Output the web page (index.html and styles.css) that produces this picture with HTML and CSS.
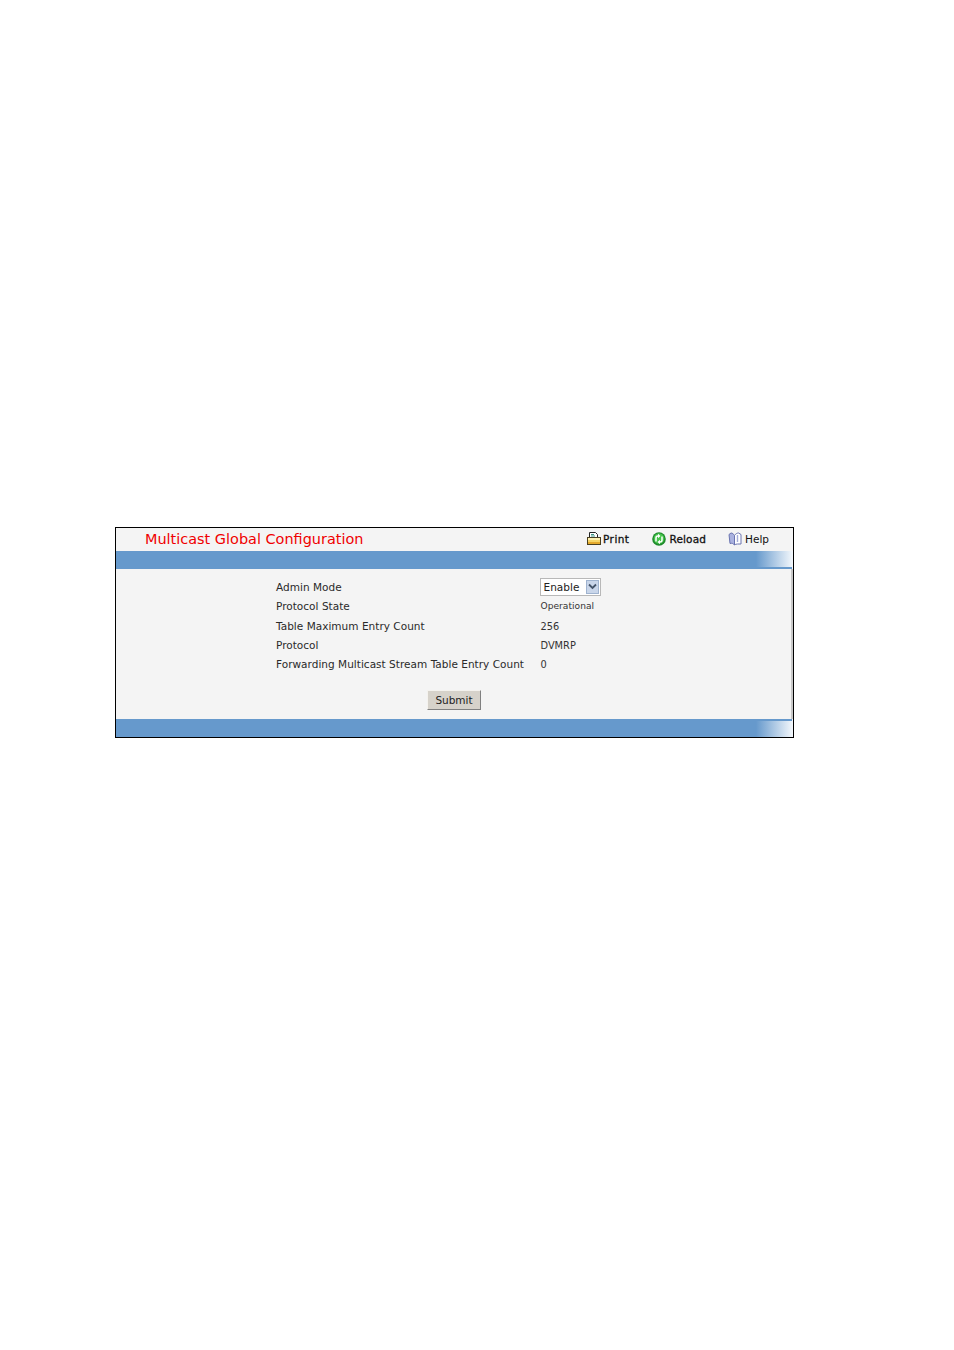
FILE: index.html
```html
<!DOCTYPE html>
<html lang="en">
<head>
<meta charset="utf-8">
<title>Multicast Global Configuration</title>
<link rel="stylesheet" href="styles.css">
</head>
<body>
<main class="frame">
  <header class="head">
    <h1 class="title">Multicast Global Configuration</h1>
    <nav class="actions">
      <a class="action print-action">
        <svg class="icon" viewBox="0 0 14 14" width="14" height="14"><path d="M2.500.5h6l2 2V5.500h-8z" fill="#fff" stroke="#222" stroke-width="1"/><path d="M4 2.500h3M4 4h4" stroke="#2a8a7a" stroke-width=".9"/><rect x=".5" y="5.500" width="13" height="7" fill="#f6d566" stroke="#4a4020" stroke-width="1"/><rect x="1" y="6" width="12" height="2" fill="#fdf0b0"/><rect x="1" y="10" width="12" height="2" fill="#e4a92c"/></svg>
        <span>Print</span>
      </a>
      <a class="action reload-action">
        <svg class="icon" viewBox="0 0 14 14" width="14" height="14"><circle cx="7" cy="7" r="6.800" fill="#1f8a2c"/><circle cx="7" cy="6.500" r="5.300" fill="#45c44a"/><path d="M4 9.500V6a2 2 0 0 1 2-2" fill="none" stroke="#fff" stroke-width="1.500"/><path d="M10 4.500V8a2 2 0 0 1-2 2" fill="none" stroke="#fff" stroke-width="1.500"/><path d="M6 1.800l2.500 2.200L6 6.200zM8 7.800L5.500 10 8 12.200z" fill="#fff"/></svg>
        <span>Reload</span>
      </a>
      <a class="action help-action">
        <svg class="icon" viewBox="0 0 14 14" width="14" height="14"><path d="M1 2.500 3 1c1.500 0 2.500 1 3.500 2.500v9.500C5.500 11.500 4 11 2 11.500z" fill="#aab2e0" stroke="#6a74b0"/><path d="M6.500 3.500C7.500 2 9 1 10.500 1L13 2.500V12H9.500c-1.200 0-2.300.3-3 1z" fill="#fff" stroke="#6a74b0"/><path d="M9.500 3v7" stroke="#a4acd8" stroke-width="1.400"/></svg>
        <span>Help</span>
      </a>
    </nav>
  </header>
  <div class="bar bar-top"></div>
  <section class="panel">
    <div class="rows">
      <div class="row">
        <span class="label">Admin Mode</span>
        <div class="field">
          <span class="select"><span class="select-text">Enable</span><span class="select-btn"><svg viewBox="0 0 9 7" width="9" height="7"><path d="M1 1.500l3.500 3.500L8 1.500" fill="none" stroke="#44546a" stroke-width="1.800"/></svg></span></span>
        </div>
      </div>
      <div class="row"><span class="label">Protocol State</span><span class="value small">Operational</span></div>
      <div class="row row-gap"><span class="label">Table Maximum Entry Count</span><span class="value">256</span></div>
      <div class="row"><span class="label">Protocol</span><span class="value">DVMRP</span></div>
      <div class="row"><span class="label">Forwarding Multicast Stream Table Entry Count</span><span class="value">0</span></div>
    </div>
    <div class="submit-row"><button class="submit" type="button">Submit</button></div>
  </section>
  <div class="bar bar-bottom"></div>
</main>
</body>
</html>
```

FILE: styles.css
```css
html, body {
  margin: 0;
  padding: 0;
  background: #fff;
}
body {
  padding: 527px 0 0 115px;
  height: 823px;
  font-family: "DejaVu Sans", Verdana, sans-serif;
  font-size: 10.500px;
  color: #222;
}
.frame {
  box-sizing: border-box;
  width: 679px;
  height: 211px;
  border: 1px solid #000;
  background: #f4f4f4;
  display: flex;
  flex-direction: column;
}
.head {
  height: 23px;
  display: flex;
  align-items: center;
  justify-content: space-between;
}
.title {
  margin: -2px 0 0 29px;
  font-size: 14.450px;
  font-weight: 400;
  color: #f00000;
  font-family: "DejaVu Sans", Verdana, sans-serif;
}
.actions {
  display: flex;
  margin-right: 24px;
}
.action {
  display: flex;
  align-items: center;
  gap: 2px;
  color: #111;
  font-size: 10.500px;
  margin-top: -1px;
}
.print-action { margin-right: 23px; }
.reload-action { margin-right: 22px; gap: 3px; }
.help-action { gap: 3px; }
.print-action span { letter-spacing: .45px; -webkit-text-stroke: .3px #111; }
.reload-action span { letter-spacing: .15px; -webkit-text-stroke: .3px #111; }
.bar {
  height: 18px;
  flex: none;
}
.bar-top {
  background:
    linear-gradient(#6699cc, #6699cc) left bottom / calc(100% - 1px) 2px no-repeat,
    linear-gradient(90deg, #6699cc 0, #6699cc 640px, #f4f8fc 100%);
}
.bar-bottom {
  background:
    linear-gradient(#6699cc, #6699cc) left top / calc(100% - 1px) 2px no-repeat,
    linear-gradient(90deg, #6699cc 0, #6699cc 640px, #f4f8fc 100%);
}
.panel {
  flex: 1;
  border-right: 2px solid #c8c8c8;
  display: flex;
  flex-direction: column;
  padding-top: 8px;
}
.rows {
  padding-left: 160px;
}
.row {
  display: flex;
  align-items: center;
  height: 19px;
  letter-spacing: .025px;
}
.row-gap {
  margin-top: 1px;
}
.label {
  width: 264.500px;
  flex: none;
  color: #2a2a2a;
}
.value {
  color: #333;
  font-size: 9.800px;
  padding-top: 1px;
}
.small { font-size: 9.100px; }
.select {
  display: flex;
  align-items: center;
  box-sizing: border-box;
  width: 61px;
  height: 18px;
  background: #fff;
  border: 1px solid #b8b8b8;
  margin-left: -1px;
}
.select-text {
  flex: 1;
  padding-left: 3px;
  color: #222;
}
.select-btn {
  width: 13px;
  height: 14px;
  margin-right: 1px;
  background: #c9d6ea;
  border: 1px solid #9fb3cf;
  box-sizing: border-box;
  display: flex;
  align-items: center;
  justify-content: center;
}
.submit-row {
  display: flex;
  padding: 17px 0 0 311px;
}
.submit {
  box-sizing: border-box;
  width: 54px;
  height: 20px;
  padding: 0;
  font: inherit;
  color: #222;
  background: #d6d2ca;
  border: 1px solid;
  border-color: #f4f2ee #808080 #808080 #f4f2ee;
}
```
